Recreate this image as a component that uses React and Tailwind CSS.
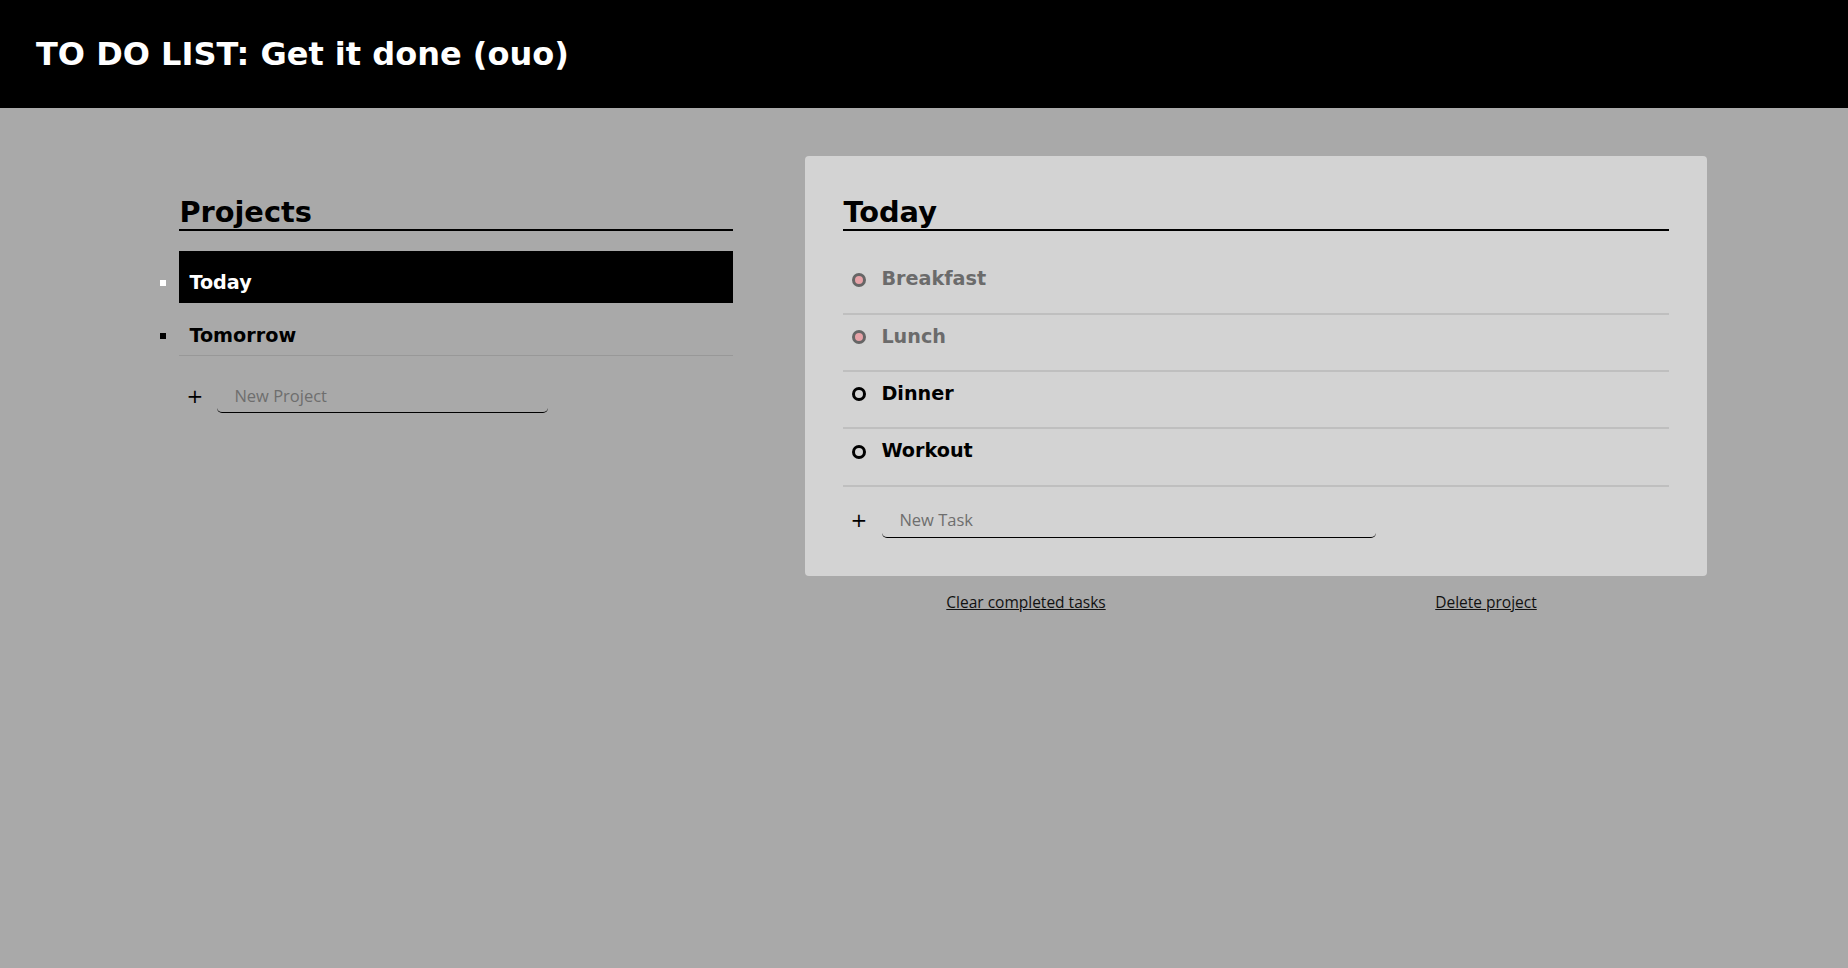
import { useState } from 'react'

const initialProjects = [
  {
    name: 'Today',
    tasks: [
      { title: 'Breakfast', done: true },
      { title: 'Lunch', done: true },
      { title: 'Dinner', done: false },
      { title: 'Workout', done: false },
    ],
  },
  { name: 'Tomorrow', tasks: [] },
]

const heading = "text-[28.8px] font-bold leading-[1.164] border-b-2 border-black font-['DejaVu_Sans',sans-serif]"
const inputCls =
  "h-[35px] bg-transparent border-0 border-b border-black rounded-[5px] px-[17px] text-[16.5px] text-black placeholder:text-[#6e6e6e] outline-none font-['Open_Sans',sans-serif]"

export default function App() {
  const [projects, setProjects] = useState(initialProjects)
  const [active, setActive] = useState(0)
  const current = projects[active]

  const toggle = (i) =>
    setProjects((ps) =>
      ps.map((p, pi) =>
        pi !== active ? p : { ...p, tasks: p.tasks.map((t, ti) => (ti === i ? { ...t, done: !t.done } : t)) }
      )
    )

  return (
    <div className="min-h-screen bg-[#a9a9a9] text-black">
      <header className="bg-black px-[36px] py-[35.5px]">
        <h1 className="text-[32px] font-bold leading-[1.164] text-white font-['DejaVu_Sans',sans-serif]">
          TO DO LIST: Get it done (ouo)
        </h1>
      </header>

      <main className="mt-[48px] flex justify-center gap-[34px]">
        {/* projects column */}
        <section className="w-[630px] px-[38.4px] pt-[39.6px] pb-[38.4px]">
          <h2 className={heading}>Projects</h2>
          <ul className="mt-[19.5px] list-[square] list-outside font-['DejaVu_Sans',sans-serif]">
            {projects.map((p, i) => (
              <li
                key={p.name}
                onClick={() => setActive(i)}
                className={`cursor-pointer border-b pl-[10px] pt-[21.5px] pb-[7.5px] text-[19.2px] font-bold leading-[1.164] ${
                  i === active ? 'bg-black text-white border-transparent' : 'border-[#989898]'
                }`}
              >
                {p.name}
              </li>
            ))}
          </ul>
          <div className="mt-[22.5px] flex items-center">
            <span className="ml-[7px] mr-[18px] w-[13px] text-[20px] leading-none font-['DejaVu_Sans',sans-serif]">+</span>
            <input className={`${inputCls} w-[331px]`} placeholder="New Project" />
          </div>
        </section>

        {/* tasks column */}
        <div className="w-[902px]">
          <section className="rounded bg-[#d3d3d3] px-[38.4px] pt-[39.6px] pb-[38.4px]">
            <h2 className={heading}>{current.name}</h2>
            <ul className="mt-[26px] font-['DejaVu_Sans',sans-serif]">
              {current.tasks.map((t, i) => (
                <li
                  key={t.title}
                  onClick={() => toggle(i)}
                  className="flex cursor-pointer items-center border-b-2 border-[#bfbfbf] pt-[11px] pb-[22px]"
                >
                  <span
                    className={`ml-[9px] mr-[15px] h-[14px] w-[14px] rounded-full border-[3px] ${
                      t.done ? 'border-[#666] bg-[#e6a2a7]' : 'border-black'
                    }`}
                  />
                  <span
                    className={`text-[19.2px] font-bold leading-[1.164] ${t.done ? 'text-[#6b6b6b]' : 'text-black'}`}
                  >
                    {t.title}
                  </span>
                </li>
              ))}
            </ul>
            <div className="mt-[16px] flex items-center">
              <span className="ml-[7px] mr-[19px] w-[13px] text-[20px] leading-none font-['DejaVu_Sans',sans-serif]">+</span>
              <input className={`${inputCls} w-[494px]`} placeholder="New Task" />
            </div>
          </section>
          <div className="-mx-[9px] mt-[15px] grid grid-cols-2 text-center text-[15.5px] text-[#111] font-['Open_Sans',sans-serif]">
            <div>
              <button className="underline">Clear completed tasks</button>
            </div>
            <div>
              <button className="underline">Delete project</button>
            </div>
          </div>
        </div>
      </main>
    </div>
  )
}
